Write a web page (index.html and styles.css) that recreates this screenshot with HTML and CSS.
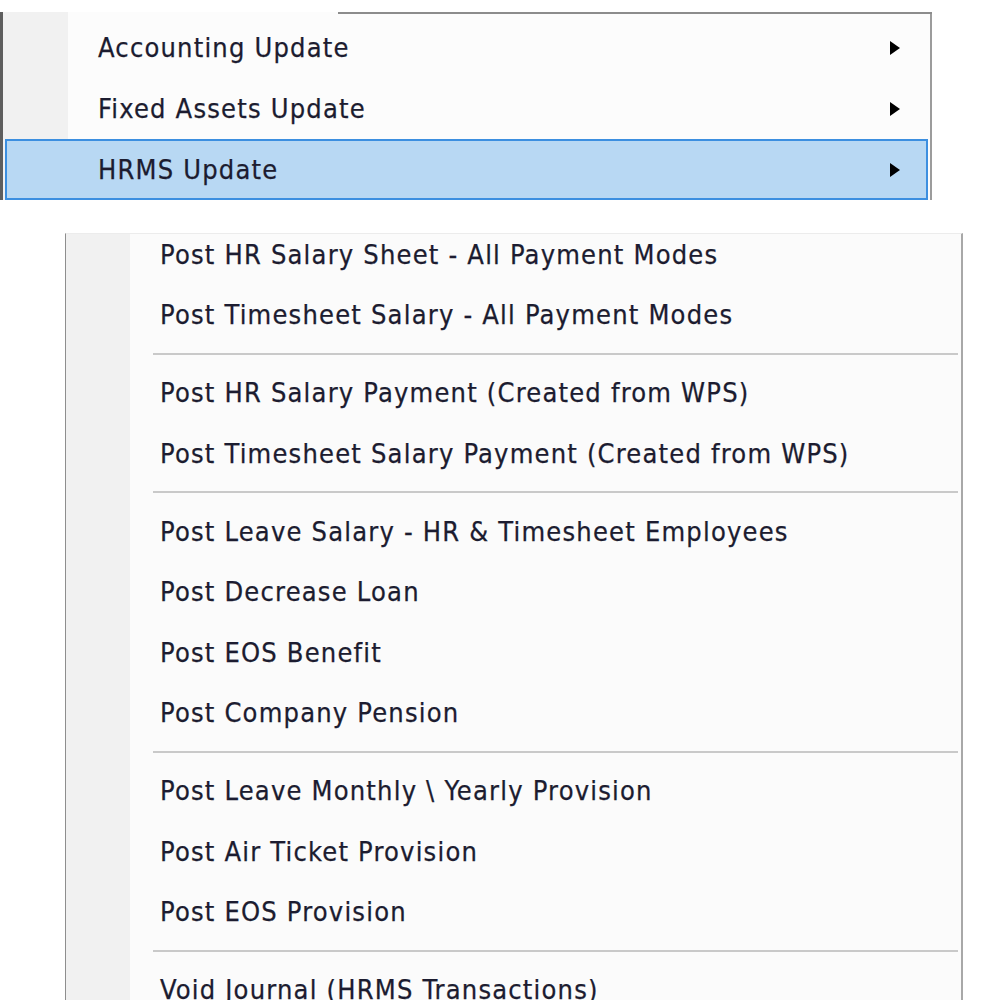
FILE: index.html
```html
<!DOCTYPE html>
<html lang="en">
<head>
    <meta charset="UTF-8">
    <meta name="viewport" content="width=device-width, initial-scale=1.0">
    <title>HRMS Update</title>
    <link rel="stylesheet" href="styles.css">
</head>
<body>
    <div class="page">
        <!-- parent popup -->
        <div class="menu topMenu">
            <div class="cap"></div>
            <div class="item">
                <span>Accounting Update</span>
                <i class="arrow"></i>
            </div>
            <div class="item">
                <span>Fixed Assets Update</span>
                <i class="arrow"></i>
            </div>
            <div class="item hot">
                <span>HRMS Update</span>
                <i class="arrow"></i>
            </div>
        </div>

        <!-- HRMS submenu -->
        <div class="menu subMenu">
            <div class="list">
                <div class="item"><span>Post HR Salary Sheet - All Payment Modes</span></div>
                <div class="item"><span>Post Timesheet Salary - All Payment Modes</span></div>
                <div class="sep"></div>
                <div class="item"><span>Post HR Salary Payment (Created from WPS)</span></div>
                <div class="item"><span>Post Timesheet Salary Payment (Created from WPS)</span></div>
                <div class="sep"></div>
                <div class="item"><span>Post Leave Salary - HR &amp; Timesheet Employees</span></div>
                <div class="item"><span>Post Decrease Loan</span></div>
                <div class="item"><span>Post EOS Benefit</span></div>
                <div class="item"><span>Post Company Pension</span></div>
                <div class="sep"></div>
                <div class="item"><span>Post Leave Monthly \ Yearly Provision</span></div>
                <div class="item"><span>Post Air Ticket Provision</span></div>
                <div class="item"><span>Post EOS Provision</span></div>
                <div class="sep"></div>
                <div class="item"><span>Void Journal (HRMS Transactions)</span></div>
            </div>
        </div>
    </div>
</body>
</html>
```

FILE: styles.css
```css
* {
    margin: 0;
    padding: 0;
    box-sizing: border-box;
}

html, body {
    height: 100%;
    overflow: hidden;
    background: #ffffff;
}

body {
    font-family: "DejaVu Sans Condensed", "DejaVu Sans", sans-serif;
    font-size: 27px;
    letter-spacing: 1.2px;
    color: #1c1c30;
    -webkit-text-stroke: 0.25px #1c1c30;
}

.page {
    padding-top: 12px;
}

.menu {
    display: flex;
    flex-direction: column;
}

/* first popup */
.topMenu {
    width: 932px;
    border-left: 3px solid #5e5e5e;
    border-right: 2px solid #9c9c9c;
    background: linear-gradient(to right, #f1f1f1 65px, #fcfcfc 65px);
}
.topMenu .cap {
    height: 2px;
    margin-left: 335px;
    margin-right: -2px;
    margin-bottom: 3px;
    background: #8c8c8c;
}
.topMenu .item {
    height: 61px;
    display: flex;
    align-items: center;
    justify-content: space-between;
    padding-left: 95px;
    padding-right: 30px;
}
.topMenu .item.hot {
    margin: 0 2px;
    padding-left: 91px;
    padding-right: 26px;
    border: 2px solid #3c8fe0;
    background: #b8d8f3;
}

.arrow {
    width: 0;
    height: 0;
    border-left: 10px solid #000000;
    border-top: 7px solid transparent;
    border-bottom: 7px solid transparent;
}

/* HRMS submenu */
.subMenu {
    margin-top: 33px;
    margin-left: 65px;
    width: 898px;
    height: 780px;
    overflow: hidden;
    border-top: 1px solid #ececec;
    border-left: 1px solid #8e8e8e;
    border-right: 2px solid #a8a8a8;
    background: linear-gradient(to right, #f1f1f1 64px, #fbfbfb 64px);
}
.subMenu .list {
    margin-top: -10.25px;
}
.subMenu .item {
    height: 60.5px;
    display: flex;
    align-items: center;
    padding-left: 94px;
}
.subMenu .sep {
    height: 17.5px;
    display: flex;
    align-items: center;
    margin-left: 87px;
    margin-right: 3px;
}
.subMenu .sep::after {
    content: "";
    flex: 1;
    height: 2px;
    background: #c9c9c9;
}
```
